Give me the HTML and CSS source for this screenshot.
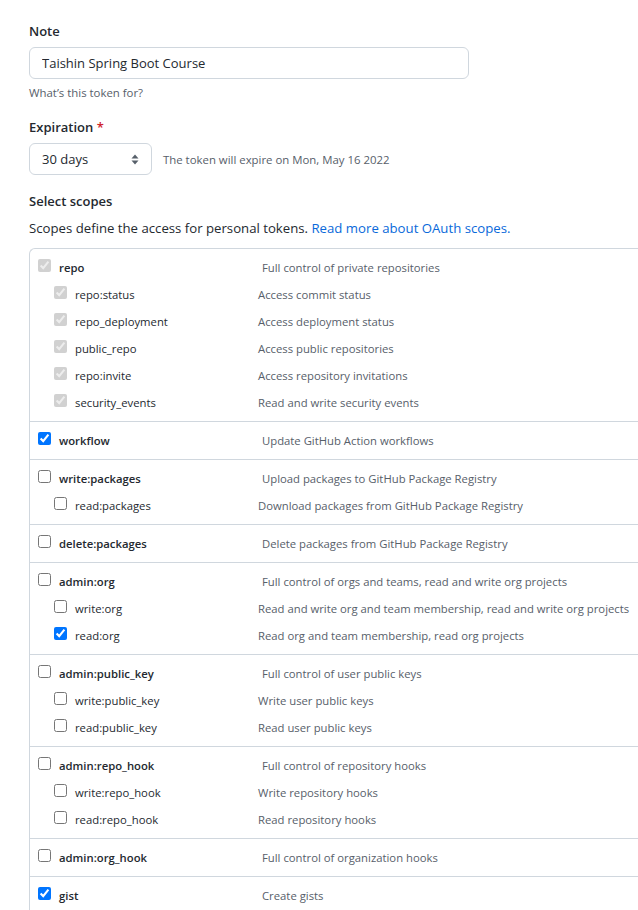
FILE: index.html
```html
<!DOCTYPE html>
<html lang="en">
<head>
<meta charset="utf-8">
<title>New personal access token</title>
<link rel="stylesheet" href="styles.css">
</head>
<body>
<main class="page">
  <div class="field">
    <label class="field-label" for="note">Note</label>
    <input class="text-input" id="note" type="text" value="Taishin Spring Boot Course">
    <p class="hint">What’s this token for?</p>
  </div>

  <div class="field field-expiry">
    <label class="field-label">Expiration <span class="req">*</span></label>
    <div class="expiry-row">
      <div class="select">
        <span>30 days</span>
        <svg class="select-arrows" width="8" height="11" viewBox="0 0 8 11" aria-hidden="true"><path d="M4 0.5L7.5 4.5H0.5Z M4 10.5L0.5 6.5H7.5Z" fill="#57606a"/></svg>
      </div>
      <span class="expiry-note">The token will expire on Mon, May 16 2022</span>
    </div>
  </div>

  <div class="field field-scopes">
    <h3 class="field-label">Select scopes</h3>
    <p class="scopes-intro">Scopes define the access for personal tokens. <a href="#">Read more about OAuth scopes.</a></p>

    <div class="scopes">
      <div class="group">
        <div class="row parent"><span class="name"><input type="checkbox" checked disabled>repo</span><span class="desc">Full control of private repositories</span></div>
        <div class="row child"><span class="name"><input type="checkbox" checked disabled>repo:status</span><span class="desc">Access commit status</span></div>
        <div class="row child"><span class="name"><input type="checkbox" checked disabled>repo_deployment</span><span class="desc">Access deployment status</span></div>
        <div class="row child"><span class="name"><input type="checkbox" checked disabled>public_repo</span><span class="desc">Access public repositories</span></div>
        <div class="row child"><span class="name"><input type="checkbox" checked disabled>repo:invite</span><span class="desc">Access repository invitations</span></div>
        <div class="row child"><span class="name"><input type="checkbox" checked disabled>security_events</span><span class="desc">Read and write security events</span></div>
      </div>
      <div class="group">
        <div class="row parent"><span class="name"><input type="checkbox" checked>workflow</span><span class="desc">Update GitHub Action workflows</span></div>
      </div>
      <div class="group">
        <div class="row parent"><span class="name"><input type="checkbox">write:packages</span><span class="desc">Upload packages to GitHub Package Registry</span></div>
        <div class="row child"><span class="name"><input type="checkbox">read:packages</span><span class="desc">Download packages from GitHub Package Registry</span></div>
      </div>
      <div class="group">
        <div class="row parent"><span class="name"><input type="checkbox">delete:packages</span><span class="desc">Delete packages from GitHub Package Registry</span></div>
      </div>
      <div class="group">
        <div class="row parent"><span class="name"><input type="checkbox">admin:org</span><span class="desc">Full control of orgs and teams, read and write org projects</span></div>
        <div class="row child"><span class="name"><input type="checkbox">write:org</span><span class="desc">Read and write org and team membership, read and write org projects</span></div>
        <div class="row child"><span class="name"><input type="checkbox" checked>read:org</span><span class="desc">Read org and team membership, read org projects</span></div>
      </div>
      <div class="group">
        <div class="row parent"><span class="name"><input type="checkbox">admin:public_key</span><span class="desc">Full control of user public keys</span></div>
        <div class="row child"><span class="name"><input type="checkbox">write:public_key</span><span class="desc">Write user public keys</span></div>
        <div class="row child"><span class="name"><input type="checkbox">read:public_key</span><span class="desc">Read user public keys</span></div>
      </div>
      <div class="group">
        <div class="row parent"><span class="name"><input type="checkbox">admin:repo_hook</span><span class="desc">Full control of repository hooks</span></div>
        <div class="row child"><span class="name"><input type="checkbox">write:repo_hook</span><span class="desc">Write repository hooks</span></div>
        <div class="row child"><span class="name"><input type="checkbox">read:repo_hook</span><span class="desc">Read repository hooks</span></div>
      </div>
      <div class="group">
        <div class="row parent"><span class="name"><input type="checkbox">admin:org_hook</span><span class="desc">Full control of organization hooks</span></div>
      </div>
      <div class="group">
        <div class="row parent"><span class="name"><input type="checkbox" checked>gist</span><span class="desc">Create gists</span></div>
      </div>
    </div>
  </div>
</main>
</body>
</html>
```

FILE: styles.css
```css
html, body {
  margin: 0;
  padding: 0;
  overflow: hidden;
  background: #ffffff;
}

body {
  font-family: "Open Sans", "Noto Sans", sans-serif;
  color: #24292f;
  font-size: 13px;
}

.page {
  padding: 21px 0 0 29px;
  width: 600px;
}

.field {
  display: flex;
  flex-direction: column;
  align-items: flex-start;
}

.field-label {
  display: block;
  margin: 0 0 5px;
  font-size: 13px;
  font-weight: 600;
  line-height: 21px;
}

.req {
  color: #cf222e;
}

.text-input {
  box-sizing: border-box;
  width: 440px;
  height: 32px;
  margin: 0;
  padding: 0 12px;
  border: 1px solid #d0d7de;
  border-radius: 6px;
  background: #ffffff;
  font-family: inherit;
  font-size: 13px;
  color: #24292f;
  outline: none;
}

.hint {
  margin: 5px 0 0;
  font-size: 11.4px;
  line-height: 18px;
  color: #57606a;
}

.field-expiry {
  margin-top: 15px;
}

.expiry-row {
  display: flex;
  align-items: center;
  gap: 11px;
}

.select {
  box-sizing: border-box;
  width: 123px;
  height: 32px;
  display: flex;
  align-items: center;
  justify-content: space-between;
  padding: 0 12px;
  border: 1px solid #d0d7de;
  border-radius: 6px;
  background: #ffffff;
  font-size: 13px;
}

.select-arrows {
  display: block;
}

.expiry-note {
  font-size: 11.4px;
  color: #57606a;
}

.field-scopes {
  margin-top: 16px;
}

.scopes-intro {
  margin: 1px 0 9px;
  font-size: 13.2px;
  line-height: 21px;
}

.scopes-intro a {
  color: #0969da;
  text-decoration: none;
}

.scopes {
  width: 620px;
  border: 1px solid #d0d7de;
  border-right: none;
  border-radius: 6px 0 0 0;
}

.group {
  padding: 5px 0;
  border-top: 1px solid #d0d7de;
}

.group:first-child {
  border-top: none;
}

.row {
  display: grid;
  grid-template-columns: 228px 1fr;
  align-items: center;
  height: 27px;
  font-size: 11.3px;
}

.name {
  display: flex;
  align-items: center;
}

.name input {
  width: 13px;
  height: 13px;
  margin: 0 8px 4px 0;
  flex: none;
}

.parent .name {
  padding-left: 8px;
  font-weight: 600;
}

.child .name {
  padding-left: 24px;
}

.desc {
  color: #57606a;
  white-space: nowrap;
}

.parent .desc {
  padding-left: 4px;
}
```
